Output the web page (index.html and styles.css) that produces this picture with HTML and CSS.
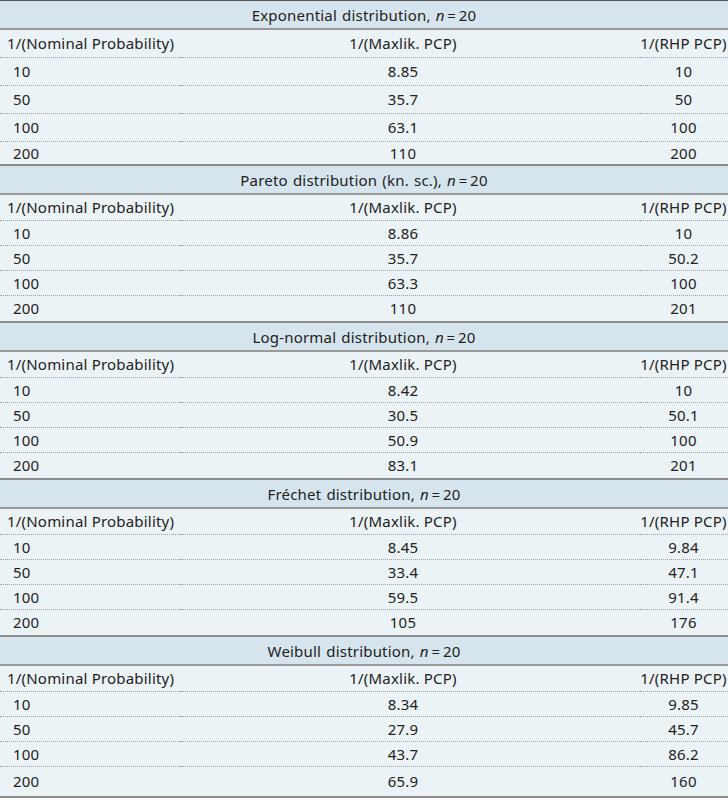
FILE: index.html
```html
<!DOCTYPE html>
<html>
<head>
<meta charset="utf-8">
<link rel="stylesheet" href="styles.css">
</head>
<body>
<table class="pcp">
  <colgroup>
    <col class="c1">
    <col class="c2">
    <col class="c3">
  </colgroup>
  <tbody class="sec sec-first">
    <tr class="title"><th colspan="3">Exponential distribution, <i>n</i>&thinsp;=&thinsp;20</th></tr>
    <tr class="head"><td class="a">1/(Nominal Probability)</td><td class="b">1/(Maxlik. PCP)</td><td class="c">1/(RHP PCP)</td></tr>
    <tr class="row"><td class="a v">10</td><td class="b">8.85</td><td class="c">10</td></tr>
    <tr class="row"><td class="a v">50</td><td class="b">35.7</td><td class="c">50</td></tr>
    <tr class="row"><td class="a v">100</td><td class="b">63.1</td><td class="c">100</td></tr>
    <tr class="row end"><td class="a v">200</td><td class="b">110</td><td class="c">200</td></tr>
  </tbody>
  <tbody class="sec">
    <tr class="title"><th colspan="3">Pareto distribution (kn. sc.), <i>n</i>&thinsp;=&thinsp;20</th></tr>
    <tr class="head"><td class="a">1/(Nominal Probability)</td><td class="b">1/(Maxlik. PCP)</td><td class="c">1/(RHP PCP)</td></tr>
    <tr class="row"><td class="a v">10</td><td class="b">8.86</td><td class="c">10</td></tr>
    <tr class="row"><td class="a v">50</td><td class="b">35.7</td><td class="c">50.2</td></tr>
    <tr class="row"><td class="a v">100</td><td class="b">63.3</td><td class="c">100</td></tr>
    <tr class="row end"><td class="a v">200</td><td class="b">110</td><td class="c">201</td></tr>
  </tbody>
  <tbody class="sec">
    <tr class="title"><th colspan="3">Log-normal distribution, <i>n</i>&thinsp;=&thinsp;20</th></tr>
    <tr class="head"><td class="a">1/(Nominal Probability)</td><td class="b">1/(Maxlik. PCP)</td><td class="c">1/(RHP PCP)</td></tr>
    <tr class="row"><td class="a v">10</td><td class="b">8.42</td><td class="c">10</td></tr>
    <tr class="row"><td class="a v">50</td><td class="b">30.5</td><td class="c">50.1</td></tr>
    <tr class="row"><td class="a v">100</td><td class="b">50.9</td><td class="c">100</td></tr>
    <tr class="row end"><td class="a v">200</td><td class="b">83.1</td><td class="c">201</td></tr>
  </tbody>
  <tbody class="sec">
    <tr class="title"><th colspan="3">Fréchet distribution, <i>n</i>&thinsp;=&thinsp;20</th></tr>
    <tr class="head"><td class="a">1/(Nominal Probability)</td><td class="b">1/(Maxlik. PCP)</td><td class="c">1/(RHP PCP)</td></tr>
    <tr class="row"><td class="a v">10</td><td class="b">8.45</td><td class="c">9.84</td></tr>
    <tr class="row"><td class="a v">50</td><td class="b">33.4</td><td class="c">47.1</td></tr>
    <tr class="row"><td class="a v">100</td><td class="b">59.5</td><td class="c">91.4</td></tr>
    <tr class="row end"><td class="a v">200</td><td class="b">105</td><td class="c">176</td></tr>
  </tbody>
  <tbody class="sec sec-last">
    <tr class="title"><th colspan="3">Weibull distribution, <i>n</i>&thinsp;=&thinsp;20</th></tr>
    <tr class="head"><td class="a">1/(Nominal Probability)</td><td class="b">1/(Maxlik. PCP)</td><td class="c">1/(RHP PCP)</td></tr>
    <tr class="row"><td class="a v">10</td><td class="b">8.34</td><td class="c">9.85</td></tr>
    <tr class="row"><td class="a v">50</td><td class="b">27.9</td><td class="c">45.7</td></tr>
    <tr class="row"><td class="a v">100</td><td class="b">43.7</td><td class="c">86.2</td></tr>
    <tr class="row end"><td class="a v">200</td><td class="b">65.9</td><td class="c">160</td></tr>
  </tbody>
</table>
</body>
</html>
```

FILE: styles.css
```css
html, body {
  margin: 0;
  padding: 0;
  background: #ffffff;
}

.pcp {
  width: 728px;
  table-layout: fixed;
  border-collapse: collapse;
  font-family: "Noto Sans", "Open Sans", sans-serif;
  font-size: 15px;
  letter-spacing: 0.2px;
  color: #222;
  background: #ecf3f6;
  border-top: 1px solid #555;
  border-bottom: 2px solid #8c8c8c;
}

.c1 { width: 180px; }
.c2 { width: 460px; }
.c3 { width: 88px; }

.pcp td, .pcp th {
  padding: 0;
  vertical-align: middle;
  white-space: nowrap;
  line-height: 18px;
}

.title th {
  background: #d6e5ed;
  font-weight: normal;
  text-align: center;
  border-bottom: 2px solid #9a9a9a;
  height: 27px;
  word-spacing: 1px;
}

.sec + .sec .title th {
  border-top: 2px solid #8c8c8c;
}

.head td, .row td {
  border-bottom: 1px dotted #9aa0a4;
}

.row.end td {
  border-bottom: none;
}

.a { text-align: left; padding-left: 7px !important; }
.a.v { padding-left: 13px !important; }
.b { text-align: center; padding-right: 14px !important; }
.c { text-align: center; padding-right: 1px !important; }

.head { height: 26px; }
.row { height: 25px; }
.row.end { height: 27px; }

.sec-first .head { height: 28px; }
.sec-first .row { height: 28px; }
.sec-first .row.end { height: 24px; }

.sec-last .row.end { height: 31px; }
```
